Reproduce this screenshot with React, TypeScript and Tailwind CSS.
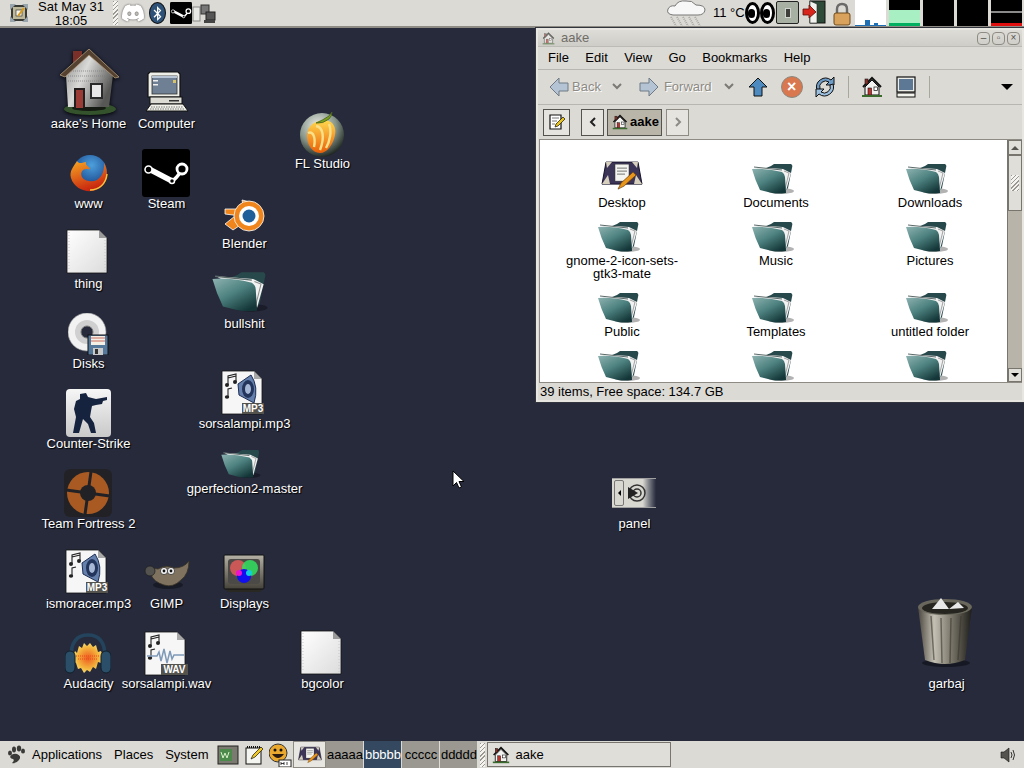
import { FaDiscord, FaBluetoothB } from "react-icons/fa"

const font = "font-['Liberation_Sans',Arial,sans-serif]"

function Folder({ w = 42, h = 32 }: { w?: number; h?: number }) {
    return (
        <svg width={w} height={h} viewBox="0 0 42 32">
            <defs>
                <linearGradient id="folderFront" x1="0" y1="0" x2="0.75" y2="1">
                    <stop offset="0" stopColor="#8db2b0" />
                    <stop offset="0.5" stopColor="#4d8280" />
                    <stop offset="1" stopColor="#143638" />
                </linearGradient>
            </defs>
            <ellipse cx="29" cy="28" rx="13" ry="3" fill="#000" opacity="0.3" />
            <path d="M14 5 L19 3 L22 1 L39 1 Q41 2 40 5 L36 25 L32 30 Z" fill="#28494c" />
            <path d="M3 4 L31 6 L39 10 L34 28 L29 20 Z" fill="#f2f2f2" />
            <path d="M32 8 L37 10 L33 26" fill="none" stroke="#8f8f8f" strokeWidth="0.8" />
            <path d="M2 4 L30 7" stroke="#5d6a6a" strokeWidth="1" />
            <path d="M0 6 Q14 5 30 9 Q33 11 33 14 L34 30 Q26 31 20 30 L8 27 Q3 17 0 6 Z" fill="url(#folderFront)" />
        </svg>
    )
}

function Home({ w = 64, h = 68 }: { w?: number; h?: number }) {
    return (
        <svg width={w} height={h} viewBox="0 0 64 68" className="[filter:drop-shadow(0_1px_2px_#000)]">
            <defs>
                <linearGradient id="wall" x1="0" y1="0" x2="1" y2="0.5">
                    <stop offset="0" stopColor="#8e8e8c" />
                    <stop offset="0.45" stopColor="#dadad8" />
                    <stop offset="1" stopColor="#575755" />
                </linearGradient>
            </defs>
            <ellipse cx="33" cy="60" rx="26" ry="6" fill="#34532c" />
            <ellipse cx="32" cy="59" rx="17" ry="3" fill="#151a12" />
            <rect x="16" y="2" width="9" height="15" fill="#7a3028" />
            <path d="M9 26 L32 6 L56 26 L52 58 L11 58 Z" fill="url(#wall)" />
            <path d="M14 22 H50 M11 27 H54 M11 32 H53" stroke="#77777a" strokeWidth="0.7" strokeDasharray="1 1" />
            <path d="M3 26 L32 0 L62 28 L58 29 L32 6 L8 28 Z" fill="#54412f" stroke="#b39a7c" strokeWidth="0.8" />
            <rect x="17" y="39" width="11" height="20" fill="#221e1e" />
            <rect x="19" y="41" width="7" height="18" fill="#9b3b36" />
            <rect x="34" y="35" width="11" height="14" fill="#e8e8e8" stroke="#2a2a2a" strokeWidth="2" />
        </svg>
    )
}

function SmallHome({ size = 22 }: { size?: number }) {
    return (
        <svg width={size} height={size} viewBox="0 0 22 22">
            <path d="M2 11 L11 2 L20 11" fill="none" stroke="#111" strokeWidth="2" />
            <rect x="4" y="3" width="3" height="5" fill="#8a3028" stroke="#111" strokeWidth="0.6" />
            <path d="M4 11 L11 4 L18 11 V19 H4 Z" fill="#f2f2f0" stroke="#111" strokeWidth="1" />
            <rect x="7" y="12" width="3.5" height="7" fill="#c0332c" stroke="#111" strokeWidth="0.6" />
            <rect x="13" y="11" width="3.5" height="3.5" fill="#fff" stroke="#111" strokeWidth="0.7" />
            <path d="M1 20 H21" stroke="#3b6b2c" strokeWidth="2" />
        </svg>
    )
}

function Computer() {
    return (
        <svg width="44" height="41" viewBox="0 0 44 41">
            <path d="M5 1 H33 L35 3 V26 H3 V3 Z" fill="#efefe9" stroke="#111" strokeWidth="1.2" />
            <rect x="7" y="5" width="25" height="18" fill="#6f8094" stroke="#333" strokeWidth="0.8" />
            <rect x="7" y="5" width="25" height="2" fill="#b8c5d4" />
            <rect x="8" y="9" width="5" height="1.5" fill="#eee" />
            <rect x="8" y="13" width="5" height="1.5" fill="#eee" />
            <rect x="28" y="9" width="3" height="3" fill="#d8c46a" />
            <rect x="5" y="26" width="32" height="7" fill="#dcdcd4" stroke="#111" strokeWidth="1" />
            <rect x="24" y="29" width="10" height="1.5" fill="#333" />
            <path d="M6 33 H38 L43 40 H1 Z" fill="#f1f1ea" stroke="#111" strokeWidth="1" />
            <path d="M6 36 H38 M5 38 H39" stroke="#777" strokeWidth="1" strokeDasharray="1.5 1" />
        </svg>
    )
}

function FlStudio() {
    return (
        <svg width="46" height="47" viewBox="0 0 46 47">
            <defs>
                <radialGradient id="flBall" cx="0.4" cy="0.3" r="0.75">
                    <stop offset="0" stopColor="#eef0ea" />
                    <stop offset="0.55" stopColor="#87958a" />
                    <stop offset="1" stopColor="#141a16" />
                </radialGradient>
                <linearGradient id="flFruit" x1="0" y1="0" x2="0" y2="1">
                    <stop offset="0" stopColor="#ffd84e" />
                    <stop offset="1" stopColor="#ea5f08" />
                </linearGradient>
            </defs>
            <circle cx="23" cy="24" r="22" fill="url(#flBall)" />
            <path d="M21 10 C32 7 38 15 36 24 C34 34 28 42 21 42 C13 42 8 33 8 25 C8 17 13 11 21 10 Z" fill="url(#flFruit)" />
            <path d="M17 15 C24 16 26 26 21 39 M9 22 C14 20 17 26 15 36 M30 13 C33 20 31 30 27 37" fill="none" stroke="#fbe08a" strokeWidth="2.4" />
            <path d="M17 12 Q24 13 30 8 Q33 5 33 1 L30 5 Q24 9 17 12 Z" fill="#7ca01f" stroke="#47611a" strokeWidth="0.8" />
        </svg>
    )
}

function Firefox() {
    return (
        <svg width="40" height="38" viewBox="0 0 40 38">
            <defs>
                <radialGradient id="ffGlobe" cx="0.55" cy="0.3" r="0.7">
                    <stop offset="0" stopColor="#4da0dc" />
                    <stop offset="1" stopColor="#123a82" />
                </radialGradient>
                <linearGradient id="ffFox" x1="0" y1="0" x2="0.4" y2="1">
                    <stop offset="0" stopColor="#f7a823" />
                    <stop offset="1" stopColor="#c9260f" />
                </linearGradient>
            </defs>
            <circle cx="21" cy="18" r="17" fill="url(#ffGlobe)" />
            <path d="M8 7 C5 12 0 17 2 24 C5 34 15 38 23 37 C32 36 38 28 38 20 C38 14 35 9 35 9 C36 20 30 29 20 27 C13 26 10 20 14 16 C17 14 20 16 21 15 C20 12 16 12 17 8 C12 9 10 10 8 7 Z" fill="url(#ffFox)" />
            <path d="M38 20 C37 30 30 36 21 36" fill="none" stroke="#f6c23e" strokeWidth="1.5" />
        </svg>
    )
}

function Steam({ size = 48 }: { size?: number }) {
    return (
        <svg width={size} height={size} viewBox="0 0 48 48">
            <rect width="48" height="48" rx="3" fill="#000" />
            <path d="M7 20 L30 32" stroke="#fff" strokeWidth="5.5" />
            <path d="M30 32 Q34 30 40 21" fill="none" stroke="#fff" strokeWidth="3.5" />
            <circle cx="6.5" cy="20.5" r="3.5" fill="#000" stroke="#fff" strokeWidth="1.6" />
            <circle cx="30" cy="32" r="2.5" fill="#000" stroke="#fff" strokeWidth="1.5" />
            <circle cx="40" cy="20" r="5" fill="#000" stroke="#fff" strokeWidth="2.8" />
        </svg>
    )
}

function BlenderIcon() {
    return (
        <svg width="41" height="34" viewBox="0 0 41 34" className="mb-[4px]">
            <path d="M18 1 L30 4 L20 11 Z M1 10 L17 10 L17 17 L1 15 Z M1 25 L11 17 L15 27 L9 31 Z" fill="#f0851c" stroke="#fff" strokeWidth="0.8" />
            <circle cx="25" cy="17" r="15" fill="#f0851c" stroke="#fff" strokeWidth="0.8" />
            <circle cx="25" cy="17" r="10" fill="#fff" />
            <circle cx="25" cy="17" r="6.5" fill="#1f5f99" />
        </svg>
    )
}

function PaperIcon() {
    return (
        <svg width="42" height="45" viewBox="0 0 42 45">
            <defs>
                <linearGradient id="paper" x1="0" y1="0" x2="1" y2="1">
                    <stop offset="0" stopColor="#ffffff" />
                    <stop offset="1" stopColor="#dcdcdc" />
                </linearGradient>
            </defs>
            <path d="M1 1 H33 L41 9 V44 H1 Z" fill="url(#paper)" stroke="#111" strokeWidth="0.8" />
            <path d="M33 1 L33 9 H41 Z" fill="#9a9a9a" />
            <path d="M3 3 V42 M39 11 V42" stroke="#c9c9c9" strokeWidth="1" strokeDasharray="1 2" />
        </svg>
    )
}

function SoundFile({ kind }: { kind: "MP3" | "WAV" }) {
    return (
        <svg width="44" height="46" viewBox="0 0 44 46">
            <path d="M1 1 H33 L41 9 V44 H1 Z" fill="#f6f6f6" stroke="#111" strokeWidth="0.8" />
            <path d="M33 1 L33 9 H41 Z" fill="#a8a8a8" />
            <path d="M7 15 L7 6 L15 4 L15 12 M7 8 L15 6" fill="none" stroke="#222" strokeWidth="1.1" />
            <circle cx="6" cy="15" r="2" fill="#222" />
            <circle cx="14" cy="12" r="2" fill="#222" />
            <path d="M7 27 V19 L11 18" fill="none" stroke="#222" strokeWidth="1.1" />
            <ellipse cx="6" cy="27" rx="2.2" ry="1.7" fill="#222" />
            {kind === "MP3" ? (
                <g>
                    <path d="M17 14 L30 5 Q38 17 33 33 L18 25 Z" fill="#6580ac" stroke="#1f2f55" strokeWidth="1" />
                    <ellipse cx="27" cy="19" rx="6" ry="9" fill="#24355c" />
                    <ellipse cx="27" cy="19" rx="3" ry="5" fill="#a6b8d6" />
                </g>
            ) : (
                <path d="M3 25 H13 L15 21 L17 30 L20 18 L23 32 L26 20 L28 28 L30 24 H40" fill="none" stroke="#7f9ab8" strokeWidth="1.5" />
            )}
            <rect x={kind === "MP3" ? 21 : 17} y="33" width={kind === "MP3" ? 22 : 27} height="11" fill="#55534e" />
            <text x={kind === "MP3" ? 32 : 30.5} y="42" textAnchor="middle" fontFamily="Liberation Sans" fontWeight="700" fontSize="10" fill="#fff">{kind}</text>
        </svg>
    )
}

function Disks() {
    return (
        <svg width="42" height="42" viewBox="0 0 42 42">
            <circle cx="19" cy="19" r="19" fill="#f2f2f2" stroke="#999" strokeWidth="0.6" />
            <circle cx="19" cy="19" r="12" fill="#d0d0d0" />
            <circle cx="19" cy="19" r="6" fill="#262a3b" stroke="#777" strokeWidth="1" />
            <rect x="20" y="22" width="20" height="20" fill="#55799a" stroke="#111" strokeWidth="1" />
            <rect x="23" y="23" width="14" height="9" fill="#f4f0e6" />
            <path d="M23 25 H37 M23 28 H37" stroke="#c04a3a" strokeWidth="0.8" />
            <rect x="25" y="35" width="10" height="7" fill="#c9c9c9" />
            <rect x="27" y="36" width="3" height="5" fill="#333" />
        </svg>
    )
}

function CounterStrike() {
    return (
        <div className="w-[45px] h-[48px] rounded-[4px] bg-gradient-to-b from-[#f6f6f6] to-[#c9c9c9] flex items-center justify-center">
            <svg width="38" height="44" viewBox="0 0 38 44">
                <path d="M10 3 L16 2 L18 6 L26 8 L37 6 L37 9 L33 10 L32 13 L26 14 L22 15 L21 20 L20 26 L24 32 L26 42 L21 42 L18 33 L13 28 L9 42 L3 42 L6 26 L4 18 L6 10 L10 8 Z" fill="#16233f" />
            </svg>
        </div>
    )
}

function TeamFortress() {
    return (
        <div className="w-[48px] h-[48px] mr-[1px] rounded-[6px] bg-[#222226] flex items-center justify-center">
            <svg width="44" height="44" viewBox="0 0 44 44">
                <circle cx="22" cy="22" r="21" fill="#a85a22" />
                <path d="M22 0 V44 M0 22 H44" stroke="#222226" strokeWidth="3" transform="rotate(8 22 22)" />
                <circle cx="22" cy="22" r="8" fill="#222226" />
            </svg>
        </div>
    )
}

function Gimp() {
    return (
        <svg width="46" height="30" viewBox="0 0 46 30">
            <ellipse cx="24" cy="25" rx="15" ry="4" fill="#000" opacity="0.35" />
            <path d="M7 8 L14 9 Q22 4 30 8 Q40 8 45 1 Q45 14 37 20 Q29 28 20 25 Q10 22 7 15 Z" fill="#7f7360" stroke="#3a3226" strokeWidth="0.8" />
            <circle cx="6" cy="11" r="5" fill="#55534f" stroke="#222" strokeWidth="0.8" />
            <circle cx="20" cy="11" r="3.6" fill="#f2f2f2" stroke="#222" strokeWidth="0.7" />
            <circle cx="27" cy="11" r="3.6" fill="#f2f2f2" stroke="#222" strokeWidth="0.7" />
            <circle cx="20" cy="11" r="1.4" fill="#111" />
            <circle cx="27" cy="11" r="1.4" fill="#111" />
        </svg>
    )
}

function Displays() {
    return (
        <svg width="42" height="38" viewBox="0 0 42 38">
            <defs>
                <linearGradient id="dispFrame" x1="0" y1="0" x2="0" y2="1">
                    <stop offset="0" stopColor="#b5b1a5" />
                    <stop offset="1" stopColor="#45423a" />
                </linearGradient>
            </defs>
            <path d="M3 35 H39 L37 38 H5 Z" fill="#2a2822" />
            <rect x="1" y="1" width="40" height="34" rx="1" fill="url(#dispFrame)" stroke="#111" strokeWidth="1" />
            <rect x="5" y="5" width="32" height="25" rx="3" fill="#4c4a46" />
            <circle cx="15" cy="14" r="8" fill="#e05a5a" opacity="0.85" />
            <circle cx="27" cy="14" r="8" fill="#30e060" opacity="0.85" />
            <circle cx="21" cy="22" r="7" fill="#1010f0" />
            <circle cx="16" cy="19" r="3" fill="#f010d0" />
            <circle cx="26" cy="19" r="3" fill="#10d0e0" />
        </svg>
    )
}

function Audacity() {
    return (
        <svg width="46" height="44" viewBox="0 0 46 44">
            <defs>
                <radialGradient id="flame" cx="0.5" cy="0.5" r="0.55">
                    <stop offset="0" stopColor="#ee5a20" />
                    <stop offset="0.65" stopColor="#f4b63e" />
                    <stop offset="1" stopColor="#f8e27e" />
                </radialGradient>
            </defs>
            <path d="M6 24 Q6 2 23 2 Q40 2 40 24" fill="none" stroke="#23445c" strokeWidth="3.5" />
            <path d="M8 24 L10 18 L12 20 L14 13 L17 15 L19 10 L22 13 L25 10 L28 14 L31 12 L33 19 L36 18 L38 24 L36 30 L33 29 L31 36 L28 34 L25 39 L22 37 L19 40 L16 35 L13 36 L11 30 L9 29 Z" fill="url(#flame)" />
            <path d="M11 23 H35 M13 26 H33" stroke="#e8481a" strokeWidth="1" strokeDasharray="1 1" />
            <rect x="0" y="18" width="10" height="22" rx="5" fill="#2b4f68" stroke="#10202c" strokeWidth="1" />
            <rect x="36" y="18" width="10" height="22" rx="5" fill="#2b4f68" stroke="#10202c" strokeWidth="1" />
        </svg>
    )
}

function PanelIcon() {
    return (
        <div className="w-[44px] h-[30px] mb-[9px] mr-[1px] flex items-center bg-gradient-to-r from-[#d8d7d0] from-70% to-[#262a3b] border-y border-[#a0a0a0]">
            <div className="w-[10px] h-[26px] ml-[2px] border border-[#777] rounded-[2px] flex items-center justify-center">
                <div className="border-y-[3px] border-y-transparent border-r-[3px] border-r-black" />
            </div>
            <svg width="20" height="20" viewBox="0 0 20 20" className="ml-[3px]">
                <circle cx="10" cy="10" r="8" fill="none" stroke="#333" strokeWidth="1.5" />
                <circle cx="10" cy="10" r="4" fill="none" stroke="#333" strokeWidth="1.5" />
                <path d="M1 4 L11 10 L1 16 Z" fill="#222" />
            </svg>
        </div>
    )
}

function Trash() {
    return (
        <svg width="56" height="70" viewBox="0 0 56 70" className="mb-[9px] mr-[3px]">
            <defs>
                <linearGradient id="bin" x1="0" y1="0" x2="1" y2="0">
                    <stop offset="0" stopColor="#4a463e" />
                    <stop offset="0.3" stopColor="#c4c0b4" />
                    <stop offset="0.6" stopColor="#7e7a6e" />
                    <stop offset="1" stopColor="#1d1c18" />
                </linearGradient>
            </defs>
            <ellipse cx="29" cy="65" rx="24" ry="4" fill="#000" opacity="0.4" />
            <path d="M1 9 L8 62 Q28 70 48 62 L55 9 Z" fill="url(#bin)" />
            <path d="M14 18 L17 62 M24 20 L25 65 M34 20 L33 65 M44 18 L41 62" stroke="#3b382f" strokeWidth="1.5" opacity="0.6" />
            <ellipse cx="28" cy="9" rx="27" ry="8" fill="#6a675d" />
            <ellipse cx="28" cy="10" rx="23" ry="6" fill="#27251f" />
            <path d="M15 11 L24 0 L32 11 Z M32 11 L41 4 L47 10 Z" fill="#e8e8e8" />
        </svg>
    )
}

function DesktopNote({ size = 42 }: { size?: number }) {
    return (
        <svg width={size} height={size * 0.72} viewBox="0 0 42 30">
            <path d="M5 2 H37 L41 24 H1 Z" fill="#3d3558" stroke="#17142a" strokeWidth="1" />
            <path d="M1 24 L7 15 L9 24 Z M41 24 L35 15 L33 24 Z M5 2 L11 2 L6 8 Z M37 2 L31 2 L36 8 Z" fill="#d6d0bd" />
            <rect x="14" y="4" width="14" height="17" fill="#f4f4f0" stroke="#333" strokeWidth="0.5" />
            <path d="M16 8 H26 M16 11 H26 M16 14 H24" stroke="#555" strokeWidth="0.8" />
            <path d="M17 29 L20 23 L32 12 L35 15 L23 26 Z" fill="#e8951c" stroke="#6b3e08" strokeWidth="0.7" />
        </svg>
    )
}

type Item = { label: string; pos: string; icon: React.ReactNode }

const desktop: Item[] = [
    { label: "aake's Home", pos: "left-[48px] top-[41px]", icon: <Home /> },
    { label: "Computer", pos: "left-[126px] top-[41px]", icon: <div className="mb-[5px]"><Computer /></div> },
    { label: "www", pos: "left-[48px] top-[121px]", icon: <div className="mb-[5px]"><Firefox /></div> },
    { label: "Steam", pos: "left-[126px] top-[121px]", icon: <div className="mr-[1px]"><Steam /></div> },
    { label: "FL Studio", pos: "left-[282px] top-[81px]", icon: <div className="mb-[-1px] mr-[1px]"><FlStudio /></div> },
    { label: "Blender", pos: "left-[204px] top-[161px]", icon: <BlenderIcon /> },
    { label: "thing", pos: "left-[48px] top-[201px]", icon: <div className="mb-[3px] mr-[4px]"><PaperIcon /></div> },
    { label: "bullshit", pos: "left-[204px] top-[241px]", icon: <div className="mb-[4px] mr-[9px]"><Folder w={56} h={42} /></div> },
    { label: "Disks", pos: "left-[48px] top-[281px]", icon: <div className="mb-[2px]"><Disks /></div> },
    { label: "sorsalampi.mp3", pos: "left-[204px] top-[341px]", icon: <div className="mb-[1px] mr-[3px]"><SoundFile kind="MP3" /></div> },
    { label: "Counter-Strike", pos: "left-[48px] top-[361px]", icon: <CounterStrike /> },
    { label: "gperfection2-master", pos: "left-[204px] top-[406px]", icon: <div className="mb-[3px] mr-[7px]"><Folder w={40} h={30} /></div> },
    { label: "Team Fortress 2", pos: "left-[48px] top-[441px]", icon: <TeamFortress /> },
    { label: "panel", pos: "left-[594px] top-[441px]", icon: <PanelIcon /> },
    { label: "ismoracer.mp3", pos: "left-[48px] top-[521px]", icon: <div className="mb-[2px] mr-[3px]"><SoundFile kind="MP3" /></div> },
    { label: "GIMP", pos: "left-[126px] top-[521px]", icon: <div className="mb-[7px]"><Gimp /></div> },
    { label: "Displays", pos: "left-[204px] top-[521px]", icon: <div className="mb-[5px] mr-[1px]"><Displays /></div> },
    { label: "Audacity", pos: "left-[48px] top-[601px]", icon: <div className="mr-[1px]"><Audacity /></div> },
    { label: "sorsalampi.wav", pos: "left-[126px] top-[601px]", icon: <div className="mr-[1px]"><SoundFile kind="WAV" /></div> },
    { label: "bgcolor", pos: "left-[282px] top-[601px]", icon: <div className="mb-[2px] mr-[3px]"><PaperIcon /></div> },
    { label: "garbaj", pos: "left-[906px] top-[601px]", icon: <Trash /> },
]

const folders = ["Documents", "Downloads", "gnome-2-icon-sets-gtk3-mate", "Music", "Pictures", "Public", "Templates", "untitled folder", "", "", ""]

function Grip() {
    return <div className="w-[5px] h-[24px] bg-[repeating-linear-gradient(135deg,#9a9890_0,#9a9890_1px,#f4f3ef_1px,#f4f3ef_3px)]" />
}

function Meter({ children, bg }: { children?: React.ReactNode; bg: string }) {
    return <div className={`relative w-[31px] h-[26px] overflow-hidden ${bg}`}>{children}</div>
}

function Eye() {
    return (
        <div className="w-[15px] h-[22px] rounded-[50%] bg-white border-[3px] border-black flex items-end justify-start">
            <div className="w-[7px] h-[9px] rounded-full bg-black mb-[3px]" />
        </div>
    )
}

function TopPanel() {
    return (
        <div className="h-[28px] shrink-0 flex bg-[#dcdad5] border-b-2 border-[#8d8b83] text-[13px] leading-[14px] text-black">
            <div className="w-[38px] flex items-center pl-[10px]">
                <svg width="18" height="18" viewBox="0 0 18 18">
                    <rect x="1" y="1" width="16" height="16" rx="2" fill="#3a3a34" />
                    <rect x="3" y="3" width="12" height="12" fill="#bdb89a" />
                    <path d="M0 0 L6 0 L0 6 Z M18 0 L12 0 L18 6 Z M0 18 L6 18 L0 12 Z M18 18 L12 18 L18 12 Z" fill="#9aa6ae" />
                    <rect x="6" y="6" width="6" height="6" fill="#f4f4ea" stroke="#222" strokeWidth="0.6" />
                    <path d="M8 12 L14 4" stroke="#d99a1c" strokeWidth="2" />
                </svg>
            </div>
            <div className="w-[66px] text-center whitespace-nowrap">
                <div>Sat May 31</div>
                <div>18:05</div>
            </div>
            <div className="ml-[9px] mt-[1px]"><Grip /></div>
            <div className="ml-[3px] w-[24px] flex items-center justify-center">
                <FaDiscord className="w-[24px] h-[22px] text-white [filter:drop-shadow(0_0_1px_#555)]" />
            </div>
            <div className="ml-[4px] w-[17px] h-[22px] mt-[2px] rounded-[50%] bg-[#2d5177] border border-[#111] flex items-center justify-center">
                <FaBluetoothB className="w-[11px] h-[15px] text-white" />
            </div>
            <div className="ml-[4px] mt-[2px]"><Steam size={22} /></div>
            <svg width="24" height="22" viewBox="0 0 24 22" className="mt-[3px]">
                <rect x="1" y="4" width="7" height="14" fill="#e8e8e4" stroke="#888" />
                <rect x="9" y="2" width="8" height="9" fill="#777" stroke="#333" />
                <rect x="14" y="9" width="9" height="8" fill="#555" stroke="#222" />
                <rect x="12" y="17" width="11" height="3" fill="#444" />
            </svg>
            <div className="flex-1" />
            <svg width="42" height="26" viewBox="0 0 42 26">
                <path d="M8 15 Q1 14 3 9 Q5 5 10 6 Q13 0 21 1 Q27 0 31 5 Q40 5 40 10 Q39 15 33 15 Z" fill="#f7f7f7" stroke="#777" strokeWidth="1" />
                <path d="M6 17 L11 26 M12 17 L17 26 M18 17 L23 26 M24 17 L29 26 M30 17 L35 26" stroke="#a9a9a6" strokeWidth="2" strokeDasharray="1 1" />
            </svg>
            <div className="ml-[6px] w-[32px] whitespace-nowrap pt-[6px]">11 °C</div>
            <div className="flex items-center w-[31px]">
                <Eye />
                <Eye />
            </div>
            <div className="mt-[1px] w-[23px] h-[23px] bg-[#a8b0a4] border border-[#222] rounded-[2px] flex items-center justify-center">
                <div className="w-[6px] h-[10px] bg-[#3e3e3a] border border-[#cfd4cc]" />
            </div>
            <svg width="24" height="24" viewBox="0 0 24 24" className="ml-[3px]">
                <rect x="8" y="1" width="15" height="22" fill="#2e4a38" stroke="#111" />
                <path d="M8 1 L15 4 V23 H8 Z" fill="#f2f2ee" stroke="#222" strokeWidth="0.6" />
                <path d="M1 9 H7 V5 L14 12 L7 18 V15 H1 Z" fill="#d8261c" stroke="#5a0f0a" strokeWidth="0.8" />
            </svg>
            <svg width="20" height="24" viewBox="0 0 20 24" className="ml-[6px] mt-[2px]">
                <path d="M5 11 V7 Q5 2 10 2 Q15 2 15 7 V11" fill="none" stroke="#6a6a68" strokeWidth="2.4" />
                <rect x="2" y="11" width="16" height="12" rx="2" fill="#d8a25c" stroke="#6e4a1c" />
            </svg>
            <div className="ml-[3px] flex gap-[3px] pr-[2px]">
                <Meter bg="bg-white">
                    <div className="absolute bottom-0 left-[10px] w-[5px] h-[6px] bg-[#1f6fb5]" />
                    <div className="absolute bottom-0 left-[19px] w-[4px] h-[3px] bg-[#1f6fb5]" />
                    <div className="absolute bottom-0 left-0 w-full h-[1px] bg-[#1f6fb5]" />
                </Meter>
                <Meter bg="bg-black">
                    <div className="absolute bottom-0 w-full h-[16px] bg-[#a8f0c4]" />
                    <div className="absolute bottom-0 w-full h-[3px] bg-[#00b060]" />
                </Meter>
                <Meter bg="bg-black" />
                <Meter bg="bg-black" />
                <Meter bg="bg-black">
                    <div className="absolute top-[11px] w-full h-[2px] bg-[#8a8a8a]" />
                    <div className="absolute bottom-0 w-full h-[3px] bg-[#e01010]" />
                </Meter>
            </div>
        </div>
    )
}

function Arrow({ dir, fill }: { dir: "l" | "r" | "u"; fill: string }) {
    const r = dir === "l" ? 180 : dir === "u" ? -90 : 0
    return (
        <svg width="20" height="20" viewBox="0 0 20 20">
            <path d="M1 6 H10 V1 L19 10 L10 19 V14 H1 Z" fill={fill} stroke={dir === "u" ? "#111" : "#6f7a86"} strokeWidth="1" transform={`rotate(${r} 10 10)`} />
        </svg>
    )
}

function Chevron() {
    return (
        <svg width="10" height="8" viewBox="0 0 10 8">
            <path d="M1 1 L5 5 L9 1" fill="none" stroke="#7c7a74" strokeWidth="2" />
        </svg>
    )
}

function FileWindow() {
    return (
        <div className="absolute left-[536px] top-[0px] w-[488px] h-[374px] flex flex-col bg-[#dcdad5] border-2 border-[#e8e6e1] outline outline-1 outline-[#33363f] text-[13px] leading-[14px] text-black">
            <div className="h-[16px] shrink-0 flex items-center bg-gradient-to-b from-[#dedcd7] to-[#cfcdc7] pl-[4px] pr-[2px] text-[#6f6d68]">
                <div className="opacity-60"><SmallHome size={13} /></div>
                <span className="ml-[6px]">aake</span>
                <div className="flex-1" />
                <div className="flex gap-[2px]">
                    {["–", "▫", "×"].map((c) => (
                        <div key={c} className="w-[13px] h-[13px] rounded-[4px] border border-[#8d8b83] flex items-center justify-center text-[10px] leading-none text-[#55534e]">{c}</div>
                    ))}
                </div>
            </div>
            <div className="h-[24px] shrink-0 flex items-center border-b border-[#b8b6b0] pl-[10px] gap-[16.4px] border-t border-t-[#bdbbb5]">
                {["File", "Edit", "View", "Go", "Bookmarks", "Help"].map((m) => (
                    <span key={m}>{m}</span>
                ))}
            </div>
            <div className="h-[35px] shrink-0 flex items-center border-b border-[#b8b6b0] text-[#8d8b85] [text-shadow:1px_1px_0_#fff]">
                <div className="ml-[11px]"><Arrow dir="l" fill="#b4c4d4" /></div>
                <span className="ml-[3px]">Back</span>
                <div className="ml-[11px]"><Chevron /></div>
                <div className="ml-[17px]"><Arrow dir="r" fill="#b4c4d4" /></div>
                <span className="ml-[5px]">Forward</span>
                <div className="ml-[12px]"><Chevron /></div>
                <div className="ml-[14px]"><Arrow dir="u" fill="#4d8ac0" /></div>
                <div className="ml-[13px] w-[22px] h-[22px] rounded-full bg-[#d9774f] border border-[#8a8a80] flex items-center justify-center text-white text-[16px] font-bold [text-shadow:none]">×</div>
                <svg width="24" height="24" viewBox="0 0 24 24" className="ml-[10px]">
                    <path d="M4 15 A9 9 0 0 1 18 5 L21 2 V10 H13 L16 7 A6 6 0 0 0 7 14 Z" fill="#6d9cc8" stroke="#111" strokeWidth="1" />
                    <path d="M20 9 A9 9 0 0 1 6 19 L3 22 V14 H11 L8 17 A6 6 0 0 0 17 10 Z" fill="#9cc0e0" stroke="#111" strokeWidth="1" />
                </svg>
                <div className="ml-[11px] w-[1px] h-[22px] bg-[#a8a69f]" />
                <div className="ml-[12px]"><SmallHome /></div>
                <svg width="20" height="22" viewBox="0 0 20 22" className="ml-[13px]">
                    <rect x="1" y="1" width="18" height="15" fill="#eeeee8" stroke="#111" strokeWidth="1.2" />
                    <rect x="3" y="3" width="14" height="11" fill="#5d7894" />
                    <rect x="1" y="17" width="18" height="4" fill="#f4f4ee" stroke="#111" />
                </svg>
                <div className="ml-[13px] w-[1px] h-[22px] bg-[#a8a69f]" />
                <div className="flex-1" />
                <div className="mr-[9px] border-x-[6px] border-x-transparent border-t-[6px] border-t-black" />
            </div>
            <div className="h-[34px] shrink-0 flex items-center pl-[5px]">
                <div className="w-[27px] h-[27px] border border-[#55534e] bg-[#e6e4df] flex items-center justify-center">
                    <svg width="18" height="18" viewBox="0 0 18 18">
                        <path d="M2 2 H13 V16 H2 Z" fill="#fff" stroke="#111" strokeWidth="1.2" />
                        <path d="M4 5 H11 M4 8 H9 M4 11 H7" stroke="#777" />
                        <path d="M7 14 L8 11 L15 4 L17 6 L10 13 Z" fill="#e8c21c" stroke="#111" strokeWidth="0.7" />
                    </svg>
                </div>
                <div className="ml-[11px] w-[23px] h-[27px] border border-[#55534e] bg-[#e6e4df] flex items-center justify-center">
                    <svg width="8" height="10" viewBox="0 0 8 10"><path d="M6 1 L2 5 L6 9" fill="none" stroke="#222" strokeWidth="2" /></svg>
                </div>
                <div className="ml-[3px] w-[55px] h-[27px] border border-[#55534e] bg-[#b9b5a9] flex items-center pl-[4px] gap-[2px] font-bold">
                    <SmallHome size={16} />
                    <span>aake</span>
                </div>
                <div className="ml-[4px] w-[23px] h-[27px] border border-[#8d8b83] bg-[#e6e4df] flex items-center justify-center">
                    <svg width="8" height="10" viewBox="0 0 8 10"><path d="M2 1 L6 5 L2 9" fill="none" stroke="#8d8b85" strokeWidth="2" /></svg>
                </div>
            </div>
            <div className="flex-1 min-h-0 flex ml-[1px] border border-r-0 border-[#8d8b83]">
                <div className="flex-1 bg-white overflow-hidden pl-[5px] pt-[24px]">
                    <div className="grid grid-cols-[154px_154px_154px] grid-rows-[58px_71px_58px_58px]">
                        <div className="flex flex-col items-center">
                            <div className="h-[31px] shrink-0"><div className="-mt-[4px]"><DesktopNote /></div></div>
                            <span className="mt-[1px]">Desktop</span>
                        </div>
                        {folders.map((f, i) => (
                            <div key={f + i} className="flex flex-col items-center">
                                <div className="h-[31px] shrink-0 mr-[6px] -mt-[1px]"><Folder /></div>
                                <span className="text-center w-[124px] mt-[2px] leading-[13px]">{f}</span>
                            </div>
                        ))}
                    </div>
                </div>
                <div className="w-[15px] bg-[#b8b4aa] flex flex-col border-l border-[#77756e]">
                    <div className="h-[15px] shrink-0 bg-[#e0ded9] border border-[#77756e] flex items-center justify-center">
                        <div className="border-x-[4px] border-x-transparent border-b-[4px] border-b-[#55534e]" />
                    </div>
                    <div className="h-[56px] shrink-0 bg-[#e0ded9] border border-[#77756e] flex items-center justify-center">
                        <div className="w-[8px] h-[16px] bg-[repeating-linear-gradient(135deg,#9a9890_0,#9a9890_1px,#f4f3ef_1px,#f4f3ef_3px)]" />
                    </div>
                    <div className="flex-1" />
                    <div className="h-[14px] shrink-0 bg-[#e0ded9] border border-[#77756e] flex items-center justify-center">
                        <div className="border-x-[4px] border-x-transparent border-t-[4px] border-t-black" />
                    </div>
                </div>
            </div>
            <div className="h-[17px] shrink-0 flex items-center pl-[2px]">39 items, Free space: 134.7 GB</div>
        </div>
    )
}

function BottomPanel() {
    return (
        <div className="h-[27px] shrink-0 flex items-center bg-[#dcdad5] text-[13px] leading-[14px] text-black">
            <svg width="20" height="20" viewBox="0 0 20 20" className="ml-[6px]">
                <path d="M4 12 Q6 8 11 9 Q16 11 13 15 Q10 19 6 18 Q9 15 7 14 Q5 14 4 12 Z" fill="#3a3a38" />
                <ellipse cx="4" cy="8" rx="2" ry="2.6" fill="#3a3a38" />
                <ellipse cx="8" cy="4.5" rx="2" ry="3" fill="#3a3a38" />
                <ellipse cx="13" cy="3.5" rx="2.2" ry="3" fill="#3a3a38" />
                <ellipse cx="17" cy="6" rx="2" ry="2.6" fill="#3a3a38" />
            </svg>
            <span className="ml-[6px]">Applications</span>
            <span className="ml-[12px]">Places</span>
            <span className="ml-[12px]">System</span>
            <svg width="22" height="20" viewBox="0 0 22 20" className="ml-[9px] shrink-0">
                <rect x="1" y="1" width="20" height="18" fill="#7a7a70" stroke="#222" />
                <rect x="3" y="4" width="12" height="12" fill="#4c8a4c" />
                <path d="M4 7 L6 13 L8 8 L10 13 L12 7" fill="none" stroke="#d8f0c8" />
            </svg>
            <svg width="20" height="20" viewBox="0 0 20 20" className="ml-[5px] shrink-0">
                <rect x="2" y="3" width="15" height="16" fill="#f4f4f0" stroke="#111" />
                <path d="M3 2 H16" stroke="#111" strokeWidth="2" strokeDasharray="1 1" />
                <path d="M7 14 L9 10 L17 2 L19 4 L11 12 Z" fill="#f0c820" stroke="#111" strokeWidth="0.7" />
            </svg>
            <svg width="23" height="24" viewBox="0 0 23 24" className="ml-[5px] shrink-0">
                <circle cx="9" cy="10" r="9" fill="#eba82e" stroke="#333" />
                <circle cx="6" cy="7" r="1.5" fill="#111" />
                <circle cx="12" cy="7" r="1.5" fill="#111" />
                <path d="M3 11 Q9 19 15 11 Z" fill="#2a1a10" />
                <rect x="10" y="17" width="12" height="7" fill="#fff" stroke="#222" />
                <path d="M12 19 V22 M15 19 V22 M12 20.5 H15 M18 19 V22" stroke="#111" strokeWidth="0.8" />
            </svg>
            <div className="ml-[1px] w-[33px] h-[27px] bg-[#e8e6e1] border border-[#8d8b83] flex items-center justify-center">
                <DesktopNote size={24} />
            </div>
            <div className="flex h-[27px] bg-[#9a9890]">
                {["aaaaa", "bbbbb", "ccccc", "ddddd"].map((w) => (
                    <div key={w} className={`w-[38px] flex items-center justify-center border-r border-[#dcdad5] ${w === "bbbbb" ? "bg-[#34495f] text-white" : ""}`}>{w}</div>
                ))}
            </div>
            <div className="ml-[2px]"><Grip /></div>
            <div className="ml-[2px] w-[184px] h-[25px] flex items-center pl-[4px] gap-[5px] bg-[#e0ded9] border border-[#77756e]">
                <SmallHome size={18} />
                <span>aake</span>
            </div>
            <div className="flex-1" />
            <svg width="16" height="16" viewBox="0 0 16 16" className="mr-[8px]">
                <path d="M1 5 H4 L9 1 V15 L4 11 H1 Z" fill="#55534e" stroke="#111" strokeWidth="0.6" />
                <path d="M11 5 Q13 8 11 11 M13 3 Q16 8 13 13" fill="none" stroke="#333" />
            </svg>
        </div>
    )
}

export default function App() {
    return (
        <div className={`w-[1024px] h-[768px] overflow-hidden flex flex-col bg-[#262a3b] ${font}`}>
            <TopPanel />
            <div className="relative flex-1 min-h-0">
                {desktop.map((d) => (
                    <div key={d.label} className={`absolute w-[81px] flex flex-col items-center ${d.pos}`}>
                        <div className="h-[48px] flex items-end justify-center">{d.icon}</div>
                        <span className="whitespace-nowrap text-[13px] leading-[14px] text-white [text-shadow:1px_1px_1px_#000]">{d.label}</span>
                    </div>
                ))}
                <FileWindow />
                <svg width="14" height="20" viewBox="0 0 14 20" className="absolute left-[452px] top-[442px]">
                    <path d="M1 1 V16 L4.5 12.5 L7 18 L9.5 17 L7 11.5 H12 Z" fill="#fff" stroke="#000" strokeWidth="1" />
                </svg>
            </div>
            <BottomPanel />
        </div>
    )
}
